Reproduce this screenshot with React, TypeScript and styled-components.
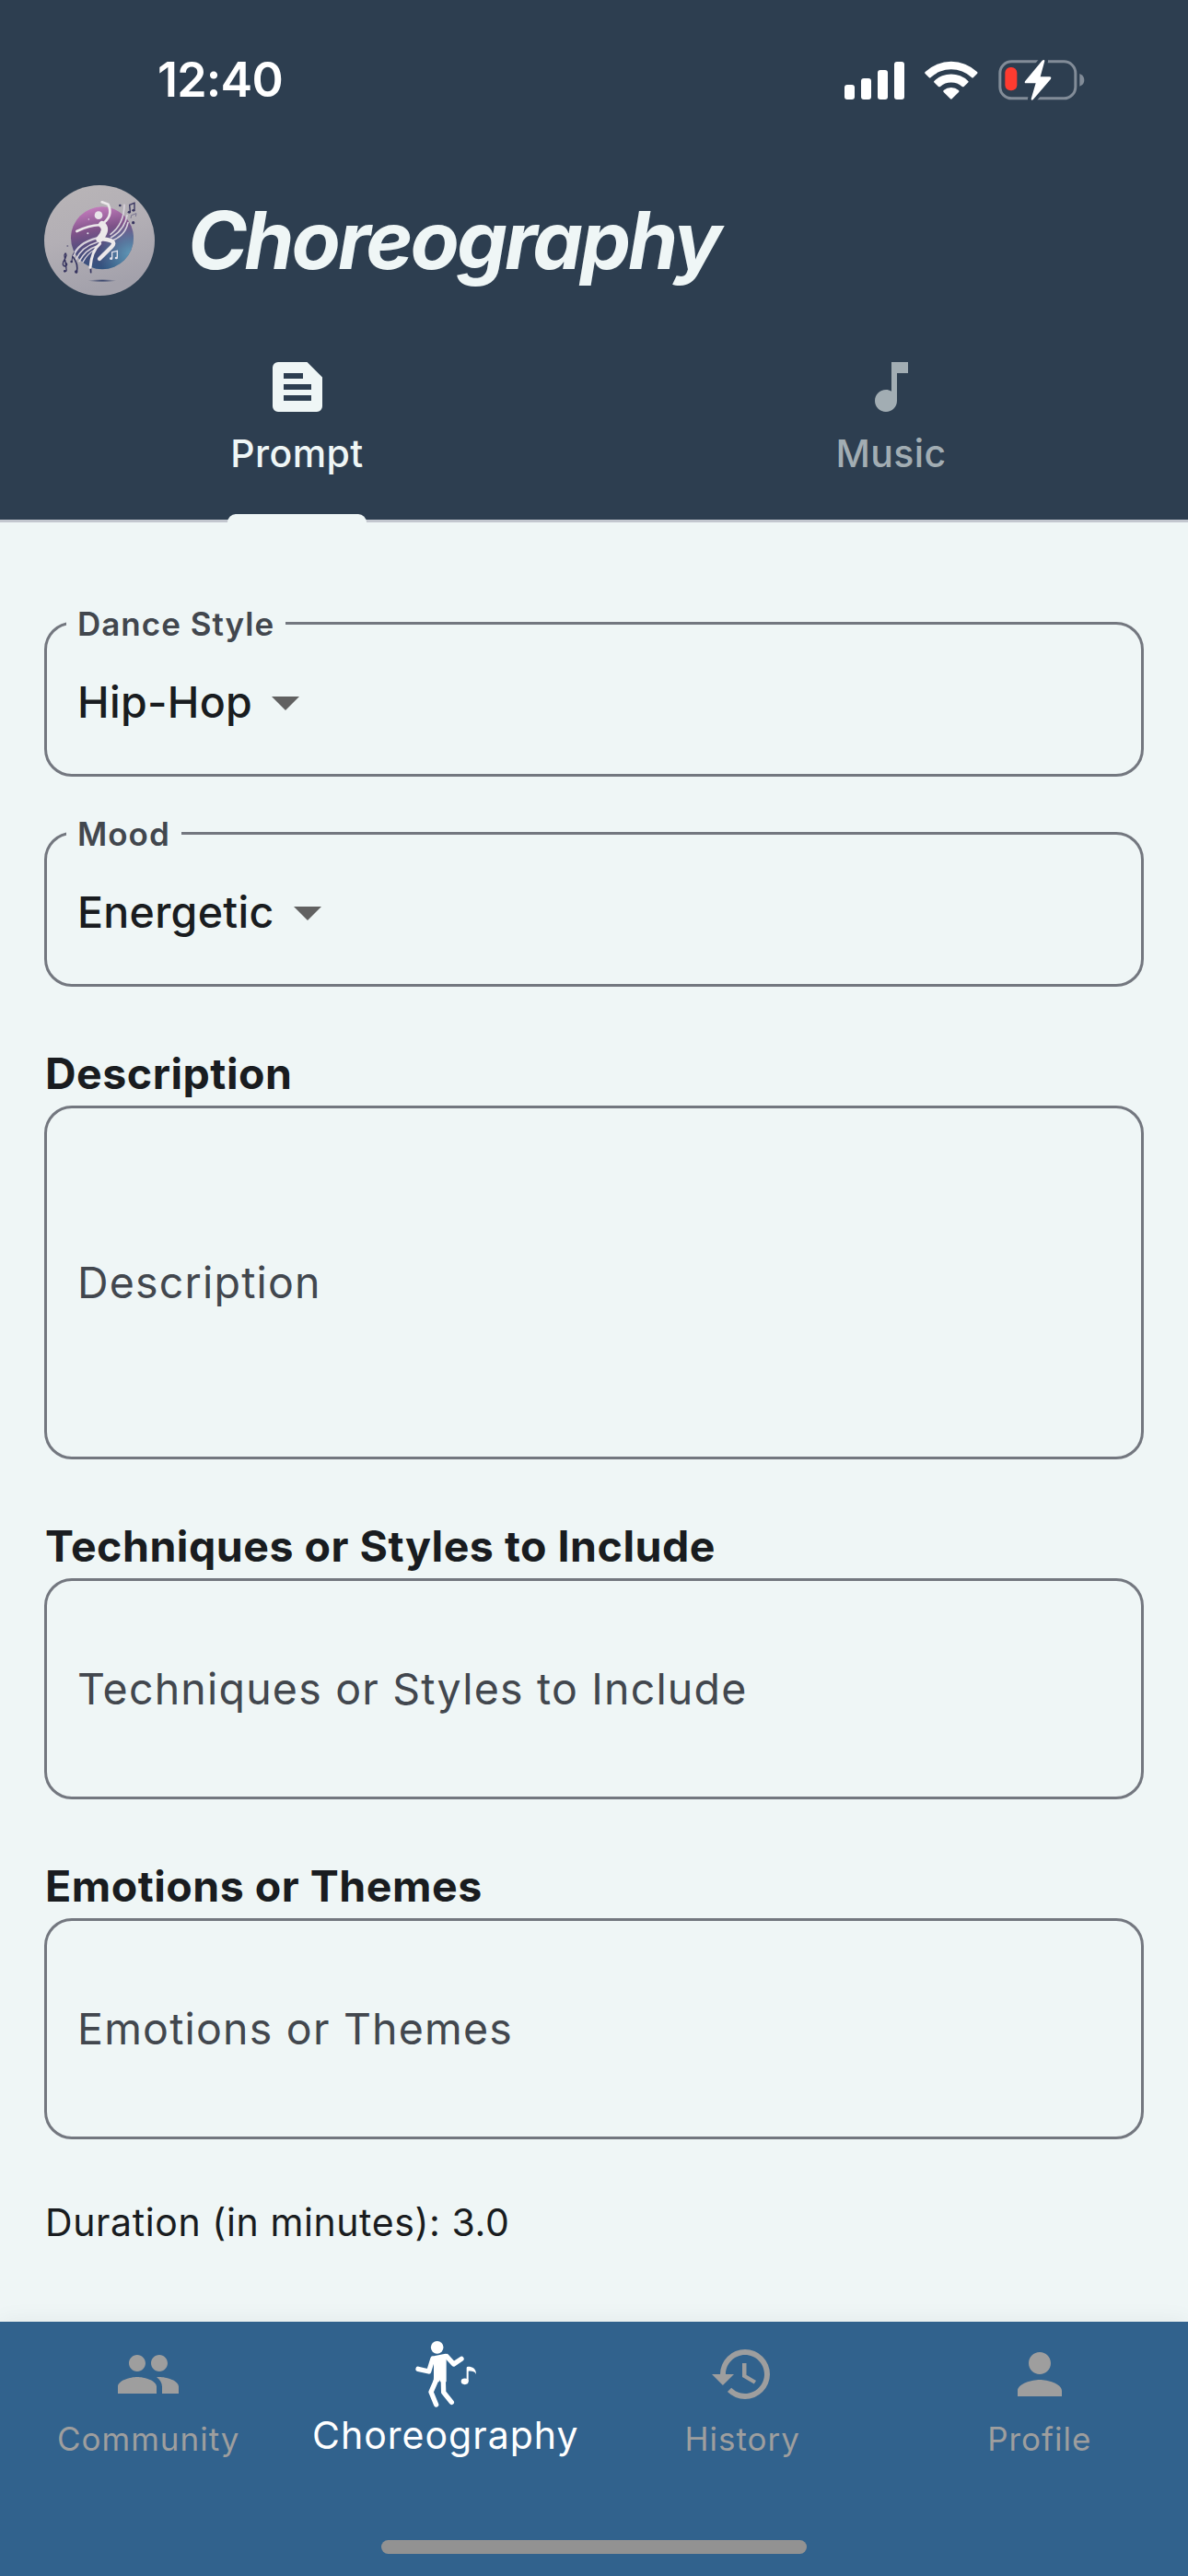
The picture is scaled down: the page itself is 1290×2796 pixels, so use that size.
import type { ComponentType } from "react";
import styled, { createGlobalStyle, ThemeProvider } from "styled-components";
import {
  MdArrowDropDown,
  MdHistory,
  MdMusicNote,
  MdPeople,
  MdPerson,
} from "react-icons/md";

const theme = {
  colors: {
    header: "#2d3e50",
    surface: "#eff6f6",
    nav: "#31628d",
    outline: "#73777f",
    divider: "#c3c7cf",
    text: "#191c20",
    textMuted: "#42474e",
    tabInactive: "#a2adb3",
    navInactive: "#9e9e9e",
    homeBar: "#929292",
    white: "#ffffff",
  },
};

type Theme = typeof theme;

type WithTheme = { theme: Theme };

const GlobalStyle = createGlobalStyle`
  * {
    box-sizing: border-box;
  }

  body {
    margin: 0;
    font-family: Inter, "Liberation Sans", sans-serif;
  }
`;

const Screen = styled.div`
  display: flex;
  flex-direction: column;
  width: 1290px;
  height: 2796px;
  overflow: hidden;
  background-color: ${({ theme }: WithTheme) => theme.colors.surface};
`;

const Header = styled.header`
  display: flex;
  flex-direction: column;
  height: 567px;
  background-color: ${({ theme }: WithTheme) => theme.colors.header};
`;

const StatusBar = styled.div`
  display: flex;
  align-items: center;
  justify-content: space-between;
  height: 177px;
  padding: 0 112px 3px 171px;
  color: ${({ theme }: WithTheme) => theme.colors.white};
`;

const Clock = styled.span`
  font-size: 52px;
  font-weight: 600;
  line-height: 60px;
  letter-spacing: -0.8px;
`;

const StatusIcons = styled.div`
  display: flex;
  align-items: center;
`;

const AppBar = styled.div`
  display: flex;
  align-items: center;
  gap: 36px;
  height: 168px;
  padding: 0 48px;
`;

const Title = styled.h1`
  margin: 0;
  color: ${({ theme }: WithTheme) => theme.colors.surface};
  font-size: 87px;
  font-style: italic;
  font-weight: 700;
  line-height: 110px;
  letter-spacing: -3px;
`;

const Tabs = styled.div`
  display: grid;
  grid-template-columns: 1fr 1fr;
  height: 222px;
  border-bottom: 3px solid ${({ theme }: WithTheme) => theme.colors.divider};
`;

const Tab = styled.div<{ $active?: boolean }>`
  display: flex;
  flex-direction: column;
  align-items: center;
  padding-top: 39px;
  color: ${({ theme, $active }: WithTheme & { $active?: boolean }) =>
    $active ? theme.colors.surface : theme.colors.tabInactive};
`;

const TabLabel = styled.span`
  margin-top: 6px;
  font-size: 41px;
  font-weight: 500;
  line-height: 60px;
  letter-spacing: 0.4px;
`;

const TabIndicator = styled.div`
  flex-shrink: 0;
  width: 151px;
  height: 9px;
  margin-top: 36px;
  border-radius: 9px 9px 0 0;
  background-color: ${({ theme }: WithTheme) => theme.colors.surface};
`;

const Form = styled.main`
  display: flex;
  flex: 1;
  flex-direction: column;
  padding: 108px 48px 0;
`;

const SelectField = styled.fieldset`
  display: flex;
  align-items: center;
  justify-content: space-between;
  height: 186px;
  margin: -18px 0 60px;
  padding: 0 33px 0 33px;
  border: 3px solid ${({ theme }: WithTheme) => theme.colors.outline};
  border-radius: 30px;
`;

const SelectLegend = styled.legend`
  height: 39px;
  margin-left: -12px;
  padding: 0 12px;
  color: ${({ theme }: WithTheme) => theme.colors.textMuted};
  font-size: 35px;
  font-weight: 600;
  line-height: 41px;
  letter-spacing: 1px;
`;

const SelectValue = styled.span`
  color: ${({ theme }: WithTheme) => theme.colors.text};
  font-size: 46.5px;
  font-weight: 500;
  line-height: 60px;
  letter-spacing: 0.3px;
`;

const FieldHeading = styled.h2`
  height: 69px;
  margin: 0;
  padding-left: 1px;
  color: ${({ theme }: WithTheme) => theme.colors.text};
  font-size: 46.5px;
  font-weight: 700;
  line-height: 69px;
  letter-spacing: 0.5px;
`;

const TextBox = styled.div<{ $height: number }>`
  display: flex;
  flex-shrink: 0;
  align-items: center;
  height: ${({ $height }) => $height}px;
  margin-bottom: 60px;
  padding: 0 33px;
  border: 3px solid ${({ theme }: WithTheme) => theme.colors.outline};
  border-radius: 30px;
  color: ${({ theme }: WithTheme) => theme.colors.textMuted};
  font-size: 46.5px;
  line-height: 60px;
  letter-spacing: 1.2px;
`;

const Duration = styled.p`
  margin: 0;
  padding-left: 1px;
  color: ${({ theme }: WithTheme) => theme.colors.text};
  font-size: 41px;
  line-height: 60px;
  letter-spacing: 0.6px;
`;

const NavBar = styled.nav`
  display: flex;
  flex-direction: column;
  align-items: center;
  height: 276px;
  background-color: ${({ theme }: WithTheme) => theme.colors.nav};
  box-shadow: 0 0 24px rgba(0, 0, 0, 0.06);
`;

const NavItems = styled.div`
  display: grid;
  grid-template-columns: repeat(4, 1fr);
  width: 100%;
  height: 237px;
`;

const NavItem = styled.div<{ $active?: boolean }>`
  display: flex;
  flex-direction: column;
  align-items: center;
  padding-top: 21px;
  color: ${({ theme, $active }: WithTheme & { $active?: boolean }) =>
    $active ? theme.colors.white : theme.colors.navInactive};
`;

const NavLabel = styled.span<{ $active?: boolean }>`
  margin-top: ${({ $active }) => ($active ? 0 : 4)}px;
  font-size: ${({ $active }) => ($active ? 41 : 35)}px;
  line-height: 60px;
  letter-spacing: 1px;
`;

const HomeIndicator = styled.div`
  width: 462px;
  height: 15px;
  border-radius: 8px;
  background-color: ${({ theme }: WithTheme) => theme.colors.homeBar};
`;

const SignalIcon = () => (
  <svg width="65" height="41" viewBox="0 0 65 41" fill="currentColor">
    <rect x="0" y="25" width="11" height="16" rx="3" />
    <rect x="18" y="18" width="11" height="23" rx="3" />
    <rect x="36" y="9" width="11" height="32" rx="3" />
    <rect x="54" y="0" width="11" height="41" rx="3" />
  </svg>
);

const StyledWifi = styled.svg`
  margin: 0 22px 0 22px;
`;

const WifiIcon = () => (
  <StyledWifi width="58" height="42" viewBox="371 75 174 126" fill="currentColor">
    <path d="M373 111A123 123 0 0 1 542 111Q545 114 542 117L530 129Q527 132 524 129A98 98 0 0 0 391 129Q388 132 385 129L373 117Q370 114 373 111Z" />
    <path d="M403 140A79 79 0 0 1 512 140Q516 143 512 146L499 159Q496 161 493 159A54 54 0 0 0 422 159Q419 161 416 159L403 146Q399 143 403 140Z" />
    <path d="M433 171A37 37 0 0 1 482 171Q485 174 482 177L460 199Q458 201 455 199L433 177Q430 174 433 171Z" />
  </StyledWifi>
);

const BatteryIcon = () => (
  <svg width="94" height="46" viewBox="611 71 282 138">
    <rect
      x="616.5"
      y="79.500"
      width="246"
      height="120"
      rx="38"
      fill="none"
      stroke="#828c98"
      strokeWidth="9"
    />
    <path d="M876 119Q891 125 891 140T876 160Z" fill="#828c98" />
    <rect x="633" y="98" width="39" height="76" rx="18" fill="#ff3b30" />
    <path
      d="M754 76L698 144Q695 150 701 150H733L718 201Q718 208 724 204L782 136Q785 129 778 129H748L762 78Q762 71 754 76Z"
      fill="#fff"
      stroke={theme.colors.header}
      strokeWidth="22"
      paintOrder="stroke"
    />
  </svg>
);

const Logo = () => (
  <svg width="120" height="120" viewBox="54 62 360 360">
    <defs>
      <linearGradient id="plate" x1="0" y1="0" x2="0.3" y2="1">
        <stop offset="0" stopColor="#b9b5b7" />
        <stop offset="0.5" stopColor="#b3afb5" />
        <stop offset="1" stopColor="#a3a1ab" />
      </linearGradient>
      <linearGradient id="orb" x1="0.4" y1="0" x2="0.6" y2="1">
        <stop offset="0" stopColor="#c47cbd" />
        <stop offset="0.35" stopColor="#7e5288" />
        <stop offset="0.65" stopColor="#4b4c7c" />
        <stop offset="1" stopColor="#305580" />
      </linearGradient>
      <radialGradient id="teal" cx="0.95" cy="0.75" r="0.5">
        <stop offset="0" stopColor="#65a8c4" stopOpacity="0.8" />
        <stop offset="1" stopColor="#65a8c4" stopOpacity="0" />
      </radialGradient>
      <radialGradient id="shadow">
        <stop offset="0" stopColor="#2f3c66" />
        <stop offset="1" stopColor="#2f3c66" stopOpacity="0" />
      </radialGradient>
    </defs>
    <circle cx="234" cy="242" r="180" fill="url(#plate)" />
    <circle cx="243" cy="234" r="102" fill="url(#orb)" />
    <circle cx="243" cy="234" r="102" fill="url(#teal)" />
    <ellipse cx="243" cy="373" rx="46" ry="5" fill="url(#shadow)" />
    <g fill="none" stroke="#d8d2dc" strokeLinecap="round">
      <path d="M148 296Q162 250 226 234" strokeWidth="7" />
      <path d="M156 306Q176 262 226 248" strokeWidth="5" />
      <path d="M168 310Q188 272 226 260" strokeWidth="5" />
      <path d="M180 312Q196 284 218 272" strokeWidth="4" />
      <path d="M270 222Q314 190 315 126" strokeWidth="5" />
      <path d="M272 232Q316 208 324 160" strokeWidth="5" />
      <path d="M276 242Q318 226 327 184" strokeWidth="5" />
    </g>
    <path
      d="M148 296Q166 318 160 346M204 306L206 346"
      fill="none"
      stroke="#34345f"
      strokeWidth="5"
      strokeLinecap="round"
    />
    <circle cx="231" cy="160" r="13" fill="#e9e4ea" />
    <g fill="none" stroke="#ece8ea" strokeLinecap="round" strokeLinejoin="round">
      <path d="M160 212Q206 190 238 192Q282 164 262 124L242 117" strokeWidth="8" />
      <path d="M242 190Q262 206 234 238" strokeWidth="22" />
      <path d="M234 236Q296 240 274 262L234 302" strokeWidth="13" />
      <path d="M236 252Q208 276 204 330" strokeWidth="9" />
    </g>
    <g fill="none" stroke="#e4e4ee" strokeWidth="4">
      <path d="M275 300V280L292 276V298" />
    </g>
    <g fill="#e4e4ee">
      <ellipse cx="272" cy="301" rx="5" ry="4" />
      <ellipse cx="289" cy="299" rx="5" ry="4" />
      <circle cx="196" cy="219" r="3" />
      <circle cx="199" cy="173" r="2" />
    </g>
    <g fill="none" stroke="#37345f" strokeWidth="4">
      <path d="M334 149L332 126L348 120V142" />
      <path d="M120 340Q128 346 126 334L120 290Q124 278 126 290Q124 300 116 312Q112 326 124 326Q132 320 124 314" />
      <path d="M144 310L146 292L152 280" strokeWidth="3" />
    </g>
    <g fill="#37345f">
      <ellipse cx="331" cy="150" rx="5" ry="4" />
      <ellipse cx="345" cy="144" rx="5" ry="4" />
      <circle cx="301" cy="128" r="4" />
      <circle cx="344" cy="184" r="5" />
      <circle cx="121" cy="342" r="4" />
      <circle cx="158" cy="344" r="5" />
      <circle cx="143" cy="311" r="4" />
      <circle cx="130" cy="260" r="3" opacity="0.5" />
    </g>
    <path
      d="M336 170L338 160L354 154L352 164"
      fill="none"
      stroke="#77738f"
      strokeWidth="3"
    />
  </svg>
);

const PromptIcon = () => (
  <svg width="72" height="72" viewBox="0 0 24 24" fill="currentColor">
    <path
      fillRule="evenodd"
      d="M15.500 3H5a2 2 0 0 0-2 2v14a2 2 0 0 0 2 2h14a2 2 0 0 0 2-2V8.500zM7 7h7v2H7zm10 10H7v-2h10zm0-4H7v-2h10z"
    />
  </svg>
);

const DancerIcon = () => (
  <svg width="72" height="72" viewBox="53 63 216 216" fill="currentColor">
    <circle cx="133" cy="83.500" r="20.500" />
    <path d="M116 116Q120 112 126 111L160 104Q165 104 167 110L163 116V196H143L141 190L139 196H120Q122 190 122 180V124Z" />
    <g
      fill="none"
      stroke="currentColor"
      strokeWidth="16"
      strokeLinecap="round"
      strokeLinejoin="round"
    >
      <path d="M71 154L106 162L119 120" />
      <path d="M164 113L187 138L212 121" />
      <path d="M130 190L113 229L130 270" />
      <path d="M153 192L154 230L180 262" />
    </g>
    <ellipse cx="223" cy="194.500" rx="12" ry="10" />
    <path d="M229 195V150Q229 146 234 146C248 146 260 152 260 171C256 162 246 160 235 161V195Z" />
  </svg>
);

type NavEntry = {
  label: string;
  icon: ComponentType<{ size?: number }>;
  active?: boolean;
};

const navEntries: NavEntry[] = [
  { label: "Community", icon: MdPeople },
  { label: "Choreography", icon: DancerIcon, active: true },
  { label: "History", icon: MdHistory },
  { label: "Profile", icon: MdPerson },
];

const selects = [
  { label: "Dance Style", value: "Hip-Hop" },
  { label: "Mood", value: "Energetic" },
];

const textFields = [
  { label: "Description", height: 384 },
  { label: "Techniques or Styles to Include", height: 240 },
  { label: "Emotions or Themes", height: 240 },
];

const Arrow = styled(MdArrowDropDown)`
  color: #616161;
`;

const SelectRow = styled.div`
  display: flex;
  align-items: center;
  justify-content: space-between;
  height: 147px;
  padding-bottom: 15px;
`;

const App = () => (
  <ThemeProvider theme={theme}>
    <GlobalStyle />
    <Screen>
      <Header>
        <StatusBar>
          <Clock>12:40</Clock>
          <StatusIcons>
            <SignalIcon />
            <WifiIcon />
            <BatteryIcon />
          </StatusIcons>
        </StatusBar>
        <AppBar>
          <Logo />
          <Title>Choreography</Title>
        </AppBar>
        <Tabs>
          <Tab $active>
            <PromptIcon />
            <TabLabel>Prompt</TabLabel>
            <TabIndicator />
          </Tab>
          <Tab>
            <MdMusicNote size={72} />
            <TabLabel>Music</TabLabel>
          </Tab>
        </Tabs>
      </Header>
      <Form>
        {selects.map(({ label, value }) => (
          <SelectField key={label} as="fieldset">
            <SelectLegend>{label}</SelectLegend>
            <SelectRow>
              <SelectValue>{value}</SelectValue>
              <Arrow size={72} />
            </SelectRow>
          </SelectField>
        ))}
        {textFields.map(({ label, height }) => (
          <div key={label}>
            <FieldHeading>{label}</FieldHeading>
            <TextBox $height={height}>{label}</TextBox>
          </div>
        ))}
        <Duration>Duration (in minutes): 3.0</Duration>
      </Form>
      <NavBar>
        <NavItems>
          {navEntries.map(({ label, icon: NavIcon, active }) => (
            <NavItem key={label} $active={active}>
              <NavIcon size={72} />
              <NavLabel $active={active}>{label}</NavLabel>
            </NavItem>
          ))}
        </NavItems>
        <HomeIndicator />
      </NavBar>
    </Screen>
  </ThemeProvider>
);

export default App;
